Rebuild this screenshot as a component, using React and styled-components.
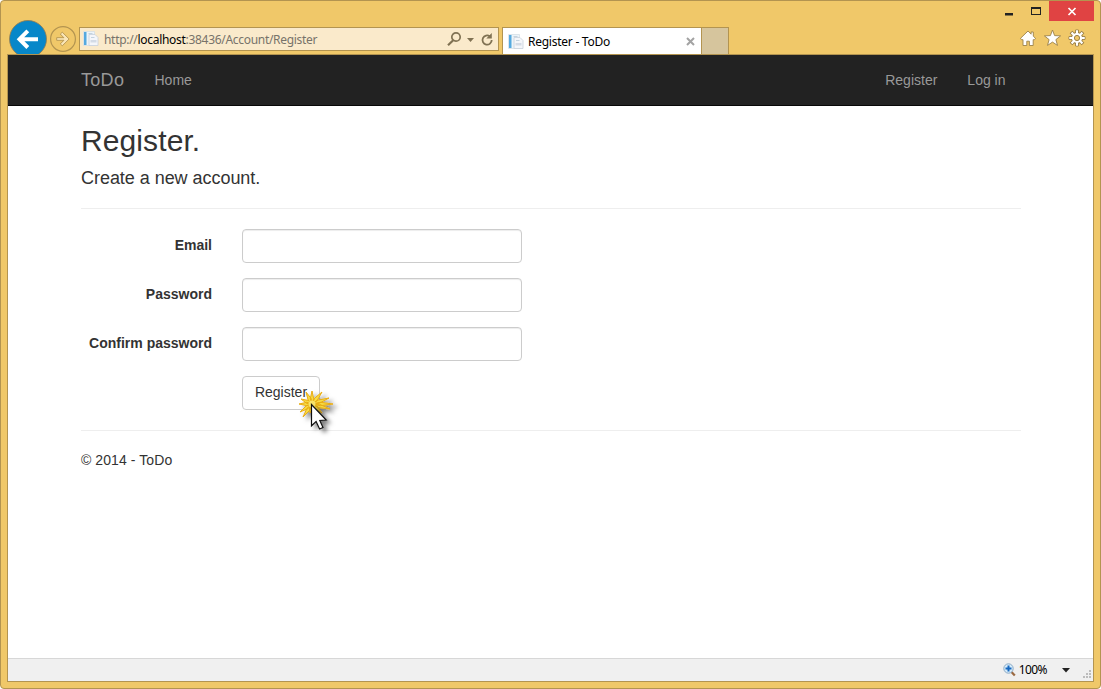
import React from "react";
import styled, { createGlobalStyle } from "styled-components";

const Global = createGlobalStyle`
  * { box-sizing: border-box; }
  body { margin: 0; background: #fff; font-family: "Liberation Sans", Arial, sans-serif; font-size: 14px; line-height: 20px; color: #333; }
`;
const edge = "#b39450";
const uiFont = '"Noto Sans", "Open Sans", sans-serif';

const Window = styled.div`
  width: 1101px;
  height: 689px;
  display: flex;
  flex-direction: column;
  background: #f0c869;
  border: 1px solid ${edge};
  border-radius: 4px;
  overflow: hidden;
`;
const Caption = styled.div`
  height: 20px;
  flex: none;
  display: flex;
  justify-content: flex-end;
  padding-right: 6px;
`;
const CaptionButton = styled.div`
  width: ${(p) => p.$width}px;
  height: 20px;
  background: ${(p) => (p.$close ? "#e04343" : "transparent")};
  svg { display: block; }
`;
const Toolbar = styled.div`
  height: 33px;
  flex: none;
  display: flex;
  align-items: flex-start;
  padding: 0 6px 0 7px;
`;
const BackIcon = styled.svg`
  width: 40px;
  height: 34px;
  margin-top: -1px;
  flex: none;
`;
const ForwardIcon = styled.svg`
  width: 31px;
  height: 33px;
  flex: none;
`;
const AddressBar = styled.div`
  width: 420px;
  height: 24px;
  margin-top: 6px;
  border: 1px solid ${edge};
  background: #faeacb;
  display: flex;
  align-items: center;
  padding-left: 3px;
  font-family: ${uiFont};
`;
const Url = styled.span`
  flex: 1;
  margin-left: 5px;
  padding-top: 2px;
  font-size: 12px;
  letter-spacing: -0.3px;
  line-height: 20px;
  color: #77736a;
  white-space: nowrap;
  b { font-weight: 400; color: #000; }
`;
const ActiveTab = styled.div`
  width: 200px;
  height: 27px;
  margin: 6px 0 0 3px;
  border: 1px solid ${edge};
  border-bottom: 0;
  background: #fff;
  display: flex;
  align-items: center;
  padding: 1px 6px 0 5px;
  font-family: ${uiFont};
  font-size: 12px;
  color: #000;
`;
const TabTitle = styled.span`
  flex: 1;
  margin-left: 4px;
  padding-top: 1px;
  letter-spacing: -0.25px;
  white-space: nowrap;
`;
const NewTab = styled.div`
  width: 27px;
  height: 27px;
  margin-top: 6px;
  border: 1px solid ${edge};
  border-width: 1px 1px 0 0;
  background: #d6c59d;
`;
const Tools = styled.div`
  margin: 8px 8px 0 auto;
  display: flex;
  gap: 7px;
  svg { display: block; }
`;
const Viewport = styled.div`
  flex: 1;
  margin: 0 6px 6px;
  border: 1px solid ${edge};
  background: #fff;
  display: flex;
  flex-direction: column;
`;
const Navbar = styled.nav`
  height: 51px;
  background: #222;
  border-bottom: 1px solid #080808;
  display: flex;
  align-items: center;
  padding: 0 87.5px 0 73px;
  color: #999;
`;
const Brand = styled.span`
  font-size: 18px;
  width: 73.5px;
  letter-spacing: 0.3px;
`;
const NavLink = styled.span`
  margin-left: ${(p) => (p.$push ? "auto" : p.$gap || "0")};
`;
const Page = styled.main`
  flex: 1;
  width: 940px;
  margin-left: 73px;
`;
const Title = styled.h2`
  margin: 18px 0 10px;
  font-size: 30px;
  font-weight: 400;
  line-height: 33px;
  letter-spacing: 0.1px;
`;
const Subtitle = styled.h4`
  margin: 0 0 20px;
  padding-top: 1px;
  font-size: 18px;
  font-weight: 400;
  line-height: 20px;
  letter-spacing: -0.04px;
`;
const Rule = styled.hr`
  margin: 20px 0;
  border: 0;
  border-top: 1px solid #eee;
`;
const Field = styled.div`
  display: grid;
  grid-template-columns: 131px 280px;
  column-gap: 30px;
  height: 34px;
  margin-bottom: 15px;
`;
const Label = styled.label`
  padding-top: 6px;
  text-align: right;
  font-weight: 700;
`;
const Input = styled.input`
  height: 34px;
  border: 1px solid #ccc;
  border-radius: 4px;
  box-shadow: inset 0 1px 1px rgba(0, 0, 0, 0.075);
  outline: none;
`;
const ButtonRow = styled.div`
  position: relative;
  display: flex;
  margin-left: 161px;
`;
const Button = styled.button`
  width: 78px;
  height: 34px;
  padding: 0 0 2px;
  border: 1px solid #ccc;
  border-radius: 4px;
  background: #fff;
  color: #333;
  font: 14px "Liberation Sans", Arial, sans-serif;
`;
const ClickMarker = styled.svg`
  position: absolute;
  left: 54px;
  top: 11px;
  overflow: visible;
`;
const Footer = styled.footer`
  margin-top: -1px;
  letter-spacing: 0.08px;
`;
const StatusBar = styled.div`
  height: 23px;
  border-top: 1px solid #d7d7d7;
  background: #f0f0f0;
  display: flex;
  align-items: center;
  justify-content: flex-end;
  font-family: ${uiFont};
  font-size: 12px;
  color: #000;
`;
const Zoom = styled.span`
  margin: 0 15px 0 3px;
  letter-spacing: -0.55px;
`;
const Grip = styled.svg`
  margin: 9px 1px 0 13px;
`;

const PageIcon = () => (
  <svg width="16" height="16" viewBox="0 0 16 16">
    <path d="M.5.5h11v14H.5z" fill="#edf4f9" stroke="#d1dce4" strokeWidth=".7" />
    <path d="M1 1h2.5v13H1z" fill="#55a9df" />
    <path d="M5.5 2.5h4" stroke="#c4d3df" />
    <path d="M6 3.5h6l3 3v8H6z" fill="#f4f6fa" stroke="#c8d1db" strokeWidth=".8" />
    <path d="M8 6.5h3.5" stroke="#c4d3df" />
    <path d="M7.5 9h6v2.5h-6z" fill="#d3dbe6" />
  </svg>
);

const rays = [
  [0, -13], [10, -12], [17, -6], [21, 0], [18, 5], [10, 9],
  [-9, 13], [-2, 9], [-12, 8], [-13, 0], [-11, -5], [-6, -12],
];
const rayPath = rays
  .map(([x, y]) => {
    const n = Math.hypot(x, y);
    const px = (-y / n) * 1.7;
    const py = (x / n) * 1.7;
    return `M0 0L${x * 0.4 + px} ${y * 0.4 + py}L${x} ${y}L${x * 0.4 - px} ${y * 0.4 - py}Z`;
  })
  .join("");
const teeth = [0, 45, 90, 135, 180, 225, 270, 315];

export default function App() {
  return (
    <>
      <Global />
      <Window>
        <Caption>
          <CaptionButton $width={27}>
            <svg width="27" height="20"><path d="M3 12h8v2.5H3z" fill="#222" /></svg>
          </CaptionButton>
          <CaptionButton $width={20}>
            <svg width="20" height="20"><path d="M2 6h10v8H2z M3 8v5h8V8z" fill="#222" fillRule="evenodd" /></svg>
          </CaptionButton>
          <CaptionButton $width={45} $close>
            <svg width="45" height="20"><path d="M19.5 7l7 7M26.5 7l-7 7" stroke="#fff" strokeWidth="1.7" /></svg>
          </CaptionButton>
        </Caption>
        <Toolbar>
          <BackIcon viewBox="0 0 40 34">
            <circle cx="20" cy="19" r="18.5" fill="#0787c9" stroke="#927b50" strokeWidth=".8" />
            <path d="M30 19.2H12M19.8 10.9l-8.3 8.3 8.3 8.3" fill="none" stroke="#fff" strokeWidth="4" />
          </BackIcon>
          <ForwardIcon viewBox="0 0 31 33">
            <circle cx="15" cy="18" r="12.4" fill="none" stroke={edge} strokeWidth="1.2" />
            <path d="M8.7 16.7h7.2l-3.6-3.6 2-1.9 6.8 6.8-6.8 6.8-2-1.9 3.6-3.6H8.7z" fill="#fae6b7" stroke={edge} strokeWidth=".9" />
          </ForwardIcon>
          <AddressBar>
            <PageIcon />
            <Url>http://<b>localhost</b>:38436/Account/Register</Url>
            <svg width="52" height="22">
              <g fill="none" stroke="#807253">
                <circle cx="10" cy="9" r="4.2" strokeWidth="1.7" />
                <path d="M7.2 12.2L2 17.2" strokeWidth="2.2" />
                <path d="M43.9 8.4A4.6 4.6 0 1 0 45.7 12" strokeWidth="1.8" />
              </g>
              <path d="M21 10h7l-3.5 4zM45.8 5v5.5h-5.5z" fill="#807253" />
            </svg>
          </AddressBar>
          <ActiveTab>
            <PageIcon />
            <TabTitle>Register - ToDo</TabTitle>
            <svg width="9" height="9"><path d="M1 1l7 7M8 1L1 8" stroke="#a3a3a3" strokeWidth="2" /></svg>
          </ActiveTab>
          <NewTab />
          <Tools>
            <svg width="17" height="18" viewBox="0 0 17 18">
              <path d="M9 2L1.5 9.3l1 1.4H4v5.8h3.8v-4.3h2.6v4.3h3.8v-5.8h1.3l1-1.4-2.2-2.1V3h-2.2v2.2z" fill="#fff" stroke="#9b8149" strokeWidth=".9" />
            </svg>
            <svg width="18" height="18" viewBox="0 0 18 18">
              <path d="M9.5 1l2.1 5.6 6 .3-4.7 3.7 1.6 5.8-5-3.3-5 3.3 1.6-5.8L1.4 6.9l6-.3z" fill="#fff" stroke="#9b8149" strokeWidth=".9" />
            </svg>
            <svg width="18" height="18" viewBox="0 0 18 18">
              {teeth.map((a) => (
                <path key={a} d="M7.6 5V1h2.8V5z" transform={`rotate(${a} 9 9)`} fill="#fff" stroke="#9b8149" strokeWidth="1" />
              ))}
              <circle cx="9" cy="9" r="5.6" fill="none" stroke="#9b8149" strokeWidth="1" />
              {teeth.map((a) => (
                <path key={a} d="M8 5V1.5h2V5z" transform={`rotate(${a} 9 9)`} fill="#fff" />
              ))}
              <circle cx="9" cy="9" r="5.1" fill="#fff" />
              <circle cx="9" cy="9" r="2.6" fill="#f0c869" stroke="#9b8149" strokeWidth="1" />
            </svg>
          </Tools>
        </Toolbar>
        <Viewport>
          <Navbar>
            <Brand>ToDo</Brand>
            <NavLink>Home</NavLink>
            <NavLink $push>Register</NavLink>
            <NavLink $gap="30px">Log in</NavLink>
          </Navbar>
          <Page>
            <Title>Register.</Title>
            <Subtitle>Create a new account.</Subtitle>
            <Rule />
            {["Email", "Password", "Confirm password"].map((name) => (
              <Field key={name}>
                <Label>{name}</Label>
                <Input />
              </Field>
            ))}
            <ButtonRow>
              <Button>Register</Button>
              <ClickMarker width="46" height="52" viewBox="0 0 46 52">
                <defs>
                  <filter id="shade" x="-50%" y="-50%" width="220%" height="220%">
                    <feDropShadow dx="4" dy="3" stdDeviation="2" floodColor="#000" floodOpacity=".5" />
                  </filter>
                </defs>
                <g filter="url(#shade)" transform="translate(16 17)">
                  <path d={rayPath} fill="#f7dc45" stroke="#e9ac12" strokeWidth="1" strokeLinejoin="round" />
                  <circle r="3.5" fill="#f7e36a" />
                </g>
                <path filter="url(#shade)" d="M15.5 17.5v21.3l4.6-4.2 3.5 7.4 3.4-1.5-3.2-7 6.4-.5z" fill="#fff" stroke="#111" strokeWidth="1.2" />
              </ClickMarker>
            </ButtonRow>
            <Rule />
            <Footer>© 2014 - ToDo</Footer>
          </Page>
          <StatusBar>
            <svg width="13" height="14" viewBox="0 0 13 14">
              <path d="M8.5 9l3.3 3.6" stroke="#9b6a43" strokeWidth="2.2" />
              <circle cx="5.5" cy="5.5" r="4.7" fill="#d5ebfa" stroke="#8ba9c4" />
              <path d="M5.5 2.5v6M2.5 5.5h6" stroke="#1668c0" strokeWidth="2" />
            </svg>
            <Zoom>100%</Zoom>
            <svg width="8" height="5"><path d="M0 0h8L4 4.5z" fill="#222" /></svg>
            <Grip width="9" height="9">
              <path d="M6 0h2v2H6zM3 3h2v2H3zM6 3h2v2H6zM0 6h2v2H0zM3 6h2v2H3zM6 6h2v2H6z" fill="#bcbcbc" />
            </Grip>
          </StatusBar>
        </Viewport>
      </Window>
    </>
  );
}
